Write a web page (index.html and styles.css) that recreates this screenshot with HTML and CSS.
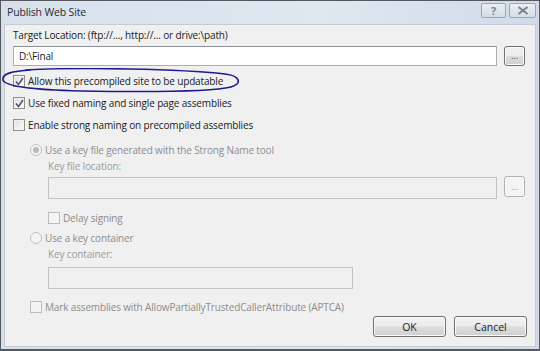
FILE: index.html
```html
<!DOCTYPE html>
<html>
<head>
  <meta charset="UTF-8">
  <title>Publish Web Site</title>
  <link rel="stylesheet" href="styles.css">
</head>
<body>
  <div class="window">
    <div class="titlebar">
      <span class="title">Publish Web Site</span>
      <div class="caption_btns">
        <span class="cbtn help">?</span>
        <span class="cbtn close">
          <svg width="12" height="9" viewBox="0 0 12 9"><path d="M1.5 1 L10.5 8 M10.5 1 L1.5 8" stroke="#7c858f" stroke-width="2.2" fill="none"/></svg>
        </span>
      </div>
    </div>
    <div class="client">
      <div class="lbl target_lbl">Target Location: (ftp://..., http://... or drive:\path)</div>
      <div class="pathrow first_path">
        <div class="textbox">D:\Final</div>
        <button class="btn browse">...</button>
      </div>

      <div class="chk_row row1">
        <span class="chk on"><svg width="9" height="9" viewBox="0 0 9 9"><path d="M1 4.5 L3.5 7.5 L8 1" stroke="#4a5a6a" stroke-width="1.6" fill="none"/></svg></span>
        <span>Allow this precompiled site to be updatable</span>
      </div>
      <div class="chk_row row2">
        <span class="chk on"><svg width="9" height="9" viewBox="0 0 9 9"><path d="M1 4.5 L3.5 7.5 L8 1" stroke="#4a5a6a" stroke-width="1.6" fill="none"/></svg></span>
        <span>Use fixed naming and single page assemblies</span>
      </div>
      <div class="chk_row row3">
        <span class="chk"></span>
        <span>Enable strong naming on precompiled assemblies</span>
      </div>

      <div class="strong">
        <div class="chk_row off radio1">
          <span class="radio sel"></span>
          <span>Use a key file generated with the Strong Name tool</span>
        </div>
        <div class="sub">
          <div class="lbl dim keyfile_lbl">Key file location:</div>
          <div class="pathrow keyfile_path">
            <div class="textbox disabled"></div>
            <button class="btn browse dis">...</button>
          </div>
          <div class="chk_row off delay">
            <span class="chk dis"></span>
            <span>Delay signing</span>
          </div>
        </div>
        <div class="chk_row off radio2">
          <span class="radio"></span>
          <span>Use a key container</span>
        </div>
        <div class="sub">
          <div class="lbl dim">Key container:</div>
          <div class="textbox disabled container_box"></div>
        </div>
        <div class="chk_row off mark">
          <span class="chk dis"></span>
          <span>Mark assemblies with AllowPartiallyTrustedCallerAttribute (APTCA)</span>
        </div>
      </div>

      <div class="footer">
        <button class="btn dlg">OK</button>
        <button class="btn dlg">Cancel</button>
      </div>

      <svg class="scribble" width="242" height="26" viewBox="0 0 242 26">
        <path d="M24 2 C80 -1 180 1 224 6 C240 8 241 16 230 19 C210 24 140 24 80 23 C40 22 4 19 2 12 C1 6 10 3 30 2" stroke="#1c1c8a" stroke-width="1.6" fill="none"/>
      </svg>
    </div>
  </div>
</body>
</html>
```

FILE: styles.css
```css
*{
  margin:0;
  padding:0;
  box-sizing:border-box;
}
body{
  background:#f0f0f0;
  font-family:"Open Sans","Noto Sans",sans-serif;
  font-size:10px;
  letter-spacing:-0.15px;
  color:#1a1a1a;
}
.window{
  width:540px;
  height:351px;
  border:1px solid #55595e;
  border-bottom-width:2px;
  background:linear-gradient(90deg,#d7e1ec 0%,#dfe8f1 60%,#cfdbe8 100%);
  padding:0 3px 2px 3px;
  display:flex;
  flex-direction:column;
}
.titlebar{
  height:23px;
  display:flex;
  justify-content:space-between;
  align-items:flex-start;
}
.title{
  font-size:10.5px;
  color:#1f2a36;
  margin:4px 0 0 3px;
}
.caption_btns{
  display:flex;
  gap:3px;
  margin-top:2px;
}
.cbtn{
  height:15px;
  border:1px solid #9aa6b2;
  border-radius:2px;
  background:linear-gradient(#e9eef4,#d4dde7);
  display:flex;
  align-items:center;
  justify-content:center;
  color:#7c858f;
  font-weight:bold;
  font-size:11px;
}
.help{ width:25px; }
.close{ width:27px; }
.client{
  flex:1;
  position:relative;
  background:#f0f0f0;
  border:1px solid #c4ccd6;
  padding:2px 0 0 8px;
}
.lbl{
  line-height:16px;
  height:16px;
  white-space:nowrap;
}
.dim{ color:#9b9b9b; }
.pathrow{
  display:flex;
  align-items:flex-start;
  gap:7px;
}
.first_path{ margin-top:3px; }
.textbox{
  width:484px;
  height:20px;
  background:#fff;
  border:1px solid #abadb3;
  border-top-color:#8e9198;
  padding:1px 0 0 5px;
  line-height:16px;
}
.textbox.disabled{
  background:#f0f0f0;
  border-color:#c2c2c2;
  height:22px;
  width:449px;
}
.container_box{
  width:305px !important;
  margin-top:5px;
}
.btn{
  font-family:inherit;
  font-size:10.5px;
  color:#1a1a1a;
  border:1px solid #707070;
  border-radius:3px;
  background:linear-gradient(#f2f2f2 0%,#ebebeb 48%,#dddddd 52%,#cfcfcf 100%);
  box-shadow:inset 0 0 0 1px #fafafa;
}
.browse{
  width:21px;
  height:20px;
  font-size:9px;
  line-height:8px;
  color:#333;
}
.browse.dis{
  height:21px;
  margin-top:-1px;
  border-color:#adb2b5;
  background:#f4f4f4;
  color:#999;
}
.chk_row{
  display:flex;
  align-items:center;
  gap:3px;
  height:16px;
  white-space:nowrap;
}
.chk_row.off{ color:#8d8d8d; }
.row1{ margin-top:7px; }
.row2{ margin-top:6px; }
.row3{ margin-top:6px; }
.chk{
  width:12px;
  height:12px;
  border:1px solid #8e8f8f;
  background:linear-gradient(135deg,#dcdcdc,#fdfdfd);
  box-shadow:inset 0 0 0 1px #f4f4f4;
  display:flex;
  align-items:center;
  justify-content:center;
}
.chk.dis{
  border-color:#bcbcbc;
  background:#f4f4f4;
}
.strong{
  padding-left:17px;
}
.radio1{ margin-top:9px; }
.radio{
  width:12px;
  height:12px;
  border-radius:50%;
  border:1px solid #c2c2c2;
  background:#f4f4f4;
  display:flex;
  align-items:center;
  justify-content:center;
}
.radio.sel::after{
  content:"";
  width:6px;
  height:6px;
  border-radius:50%;
  background:#b9b9b9;
}
.sub{
  padding-left:18px;
}
.keyfile_path{ margin-top:3px; }
.delay{ margin-top:11px; }
.radio2{ margin-top:4px; }
.mark{ margin-top:10px; }
.footer{
  display:flex;
  justify-content:flex-end;
  gap:8px;
  margin-top:1px;
  padding-right:8px;
}
.dlg{
  width:73px;
  height:21px;
}
.scribble{
  position:absolute;
  left:-4px;
  top:43px;
}
```
